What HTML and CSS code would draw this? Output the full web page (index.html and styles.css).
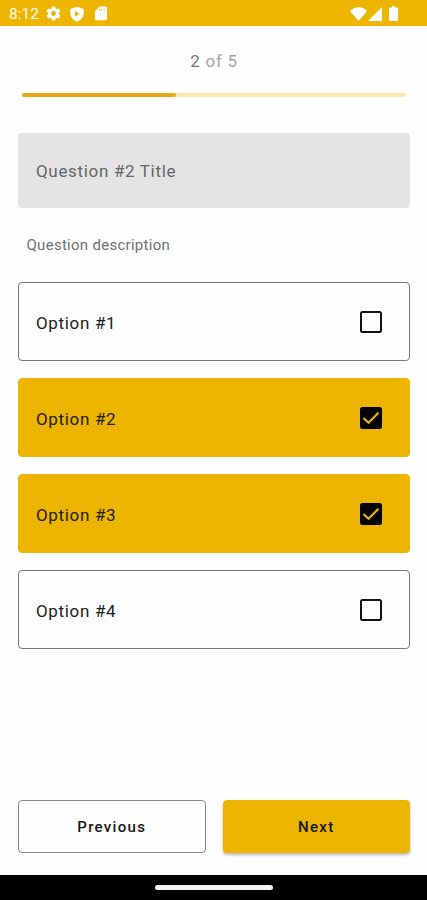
FILE: index.html
```
<!DOCTYPE html>
<html lang="en">
<head>
  <meta charset="UTF-8" />
  <meta name="viewport" content="width=device-width, initial-scale=1.0"/>
  <title>Survey</title>
  <link rel="stylesheet" href="styles.css">
</head>
<body>
  <div class="screen">
    <div class="status-bar">
      <span class="clock">8:12</span>
      <svg class="icon gear" viewBox="0 0 24 24"><path fill-rule="evenodd" d="M19.4 13a7.5 7.5 0 0 0 0-2l2.1-1.65c.2-.15.25-.4.12-.64l-2-3.46c-.12-.22-.38-.3-.6-.22l-2.5 1a7.3 7.3 0 0 0-1.7-1l-.37-2.65A.5.5 0 0 0 14 2h-4a.5.5 0 0 0-.5.42l-.37 2.65a7.7 7.7 0 0 0-1.7 1l-2.5-1a.5.5 0 0 0-.6.22l-2 3.46c-.13.22-.07.49.12.64L4.56 11a7.9 7.9 0 0 0 0 2l-2.1 1.65c-.2.15-.25.42-.12.64l2 3.46c.12.22.38.3.6.22l2.5-1c.52.4 1.08.73 1.7.98l.37 2.65c.04.24.25.42.5.42h4c.25 0 .46-.18.5-.42l.37-2.65a7.7 7.7 0 0 0 1.7-.98l2.5 1c.22.08.48 0 .6-.22l2-3.46a.5.5 0 0 0-.12-.64zM12 15.5a3.5 3.5 0 1 1 0-7 3.5 3.5 0 0 1 0 7z"/></svg>
      <svg class="icon shield" viewBox="0 0 24 24"><path fill-rule="evenodd" d="M12 1 2 4.500V11c0 6 4.500 10.500 10 12.500C17.500 21.500 22 17 22 11V4.500zM9 7.500l7 4.300-7 4.300z"/></svg>
      <svg class="icon card" viewBox="0 0 24 24"><path fill-rule="evenodd" d="M10 1.500h9a2 2 0 0 1 2 2V20a2 2 0 0 1-2 2H5a2 2 0 0 1-2-2V8.500zM9 5v2.500h1.500V5zM12.500 5v2.500H14V5zM16 5v2.500h1.500V5z"/></svg>
      <svg class="icon wifi" viewBox="0 0 17 14"><path d="M8.500 14 0 4c2.200-2.300 5.200-3.700 8.500-3.700S14.800 1.700 17 4z"/></svg>
      <svg class="icon signal" viewBox="0 0 14 14"><path d="M14 0v14H0z"/></svg>
      <svg class="icon battery" viewBox="0 0 9 15"><path d="M3 0h3v1.500h2q1 0 1 1V14q0 1-1 1H1q-1 0-1-1V2.500q0-1 1-1h2z"/></svg>
    </div>

    <div class="survey">
      <div class="counter"><span class="current">2</span> of 5</div>
      <div class="progress"><div class="progress-fill"></div></div>
      <div class="question">Question #2 Title</div>
      <p class="description">Question description</p>

      <div class="options">
        <div class="option">
          <span>Option #1</span>
          <svg class="check" viewBox="0 0 22 22"><rect class="box" x="1" y="1" width="20" height="20" rx="1.5"/></svg>
        </div>
        <div class="option selected">
          <span>Option #2</span>
          <svg class="check" viewBox="0 0 22 22"><rect class="box" x="1" y="1" width="20" height="20" rx="1.5"/><path class="tick" d="M3.500 11 8.500 15.800 18.500 5.800"/></svg>
        </div>
        <div class="option selected">
          <span>Option #3</span>
          <svg class="check" viewBox="0 0 22 22"><rect class="box" x="1" y="1" width="20" height="20" rx="1.5"/><path class="tick" d="M3.500 11 8.500 15.800 18.500 5.800"/></svg>
        </div>
        <div class="option">
          <span>Option #4</span>
          <svg class="check" viewBox="0 0 22 22"><rect class="box" x="1" y="1" width="20" height="20" rx="1.5"/></svg>
        </div>
      </div>

      <div class="actions">
        <button type="button" class="btn">Previous</button>
        <button type="button" class="btn next">Next</button>
      </div>
    </div>

    <div class="nav-bar"><div class="handle"></div></div>
  </div>
</body>
</html>
```
FILE: styles.css
```
* {
  box-sizing: border-box;
}
body {
  margin: 0;
  font-family: Roboto, sans-serif;
  background: #fefefe;
  color: #202020;
}
.screen {
  height: 900px;
  display: flex;
  flex-direction: column;
}
.status-bar {
  height: 26px;
  padding: 1px 29px 0 9px;
  display: flex;
  align-items: center;
  background: #eeb500;
  color: #fff;
}
.clock {
  width: 36px;
  font-size: 15.5px;
}
.icon {
  fill: #fff;
}
.gear {
  width: 17px;
  height: 17px;
}
.shield {
  width: 16px;
  height: 16px;
  margin-left: 7px;
}
.card {
  width: 16px;
  height: 17px;
  margin-left: 8px;
}
.wifi {
  width: 17px;
  height: 14px;
  margin-left: auto;
}
.signal {
  width: 14px;
  height: 14px;
  margin-left: 1px;
}
.battery {
  width: 9px;
  height: 15px;
  margin-left: 7px;
}
.survey {
  flex: 1;
  padding: 24px 17px 22px 18px;
  display: flex;
  flex-direction: column;
}
.counter {
  height: 22px;
  line-height: 22px;
  text-align: center;
  font-size: 17px;
  letter-spacing: 0.7px;
  color: #a5a5a5;
}
.current {
  color: #777;
}
.progress {
  height: 4px;
  margin: 21px 4px 0;
  border-radius: 2px;
  background: #f9e9ae;
}
.progress-fill {
  width: 40%;
  height: 4px;
  border-radius: 2px;
  background: #e5a913;
}
.question {
  height: 75px;
  margin-top: 35.5px;
  padding: 1px 18px 0;
  display: flex;
  align-items: center;
  border-radius: 4px;
  background: #e4e4e4;
  color: #666;
  font-size: 17px;
  letter-spacing: 0.67px;
}
.description {
  height: 20px;
  margin: 27px 8.5px 0;
  line-height: 20px;
  font-size: 15px;
  letter-spacing: 0.28px;
  color: #707070;
}
.options {
  margin-top: 27.5px;
  display: flex;
  flex-direction: column;
  gap: 17px;
}
.option {
  height: 79px;
  padding: 0 27px 0 17px;
  display: flex;
  align-items: center;
  justify-content: space-between;
  border: 1px solid #777;
  border-radius: 4px;
  font-size: 17px;
  letter-spacing: 0.67px;
}
.option span {
  padding-top: 2px;
}
.selected {
  background: #eeb500;
  border-color: #eeb500;
}
.check {
  width: 22px;
  height: 22px;
}
.box {
  fill: none;
  stroke: #111;
  stroke-width: 2;
}
.selected .box {
  fill: #050505;
  stroke: #050505;
}
.tick {
  fill: none;
  stroke: #eeb500;
  stroke-width: 2;
}
.actions {
  margin-top: auto;
  display: flex;
  gap: 17px;
}
.btn {
  flex: 1;
  height: 53px;
  padding: 1px 0 0;
  border: 1px solid #888;
  border-radius: 4px;
  background: #fefefe;
  color: #151515;
  font-family: inherit;
  font-size: 15px;
  font-weight: 500;
  letter-spacing: 1.3px;
}
.next {
  border-color: #eeb500;
  background: #eeb500;
  box-shadow: 0 2px 3px rgba(0,0,0,0.28);
}
.nav-bar {
  height: 25px;
  display: flex;
  align-items: center;
  justify-content: center;
  background: #000;
}
.handle {
  width: 118px;
  height: 5px;
  border-radius: 3px;
  background: #f2f2f2;
}
```
